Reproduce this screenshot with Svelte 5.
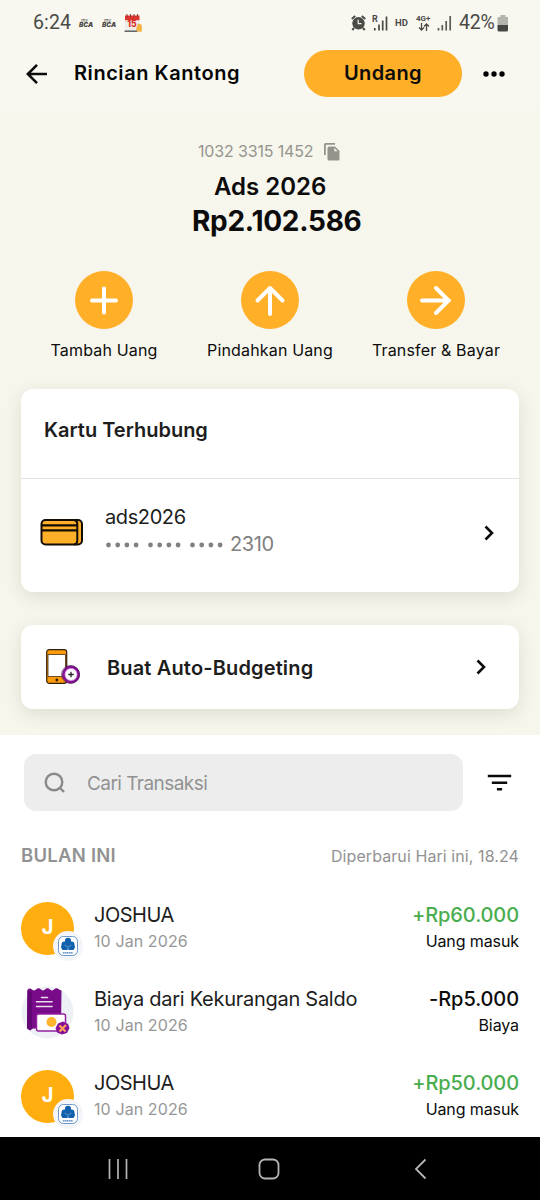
<script lang="ts">
  type Transaction = {
    title: string;
    date: string;
    amount: string;
    note: string;
    kind: 'in' | 'fee';
  };

  const actions = [
    { label: 'Tambah Uang', path: 'M29 17.500v24M17 29.500h24' },
    { label: 'Pindahkan Uang', path: 'M29 43V17M16.500 29.500L29 17l12.500 12.500' },
    { label: 'Transfer & Bayar', path: 'M15 29.500h27M29 17l12.500 12.500L29 42' },
  ];

  const transactions: Transaction[] = [
    { title: 'JOSHUA', date: '10 Jan 2026', amount: '+Rp60.000', note: 'Uang masuk', kind: 'in' },
    { title: 'Biaya dari Kekurangan Saldo', date: '10 Jan 2026', amount: '-Rp5.000', note: 'Biaya', kind: 'fee' },
    { title: 'JOSHUA', date: '10 Jan 2026', amount: '+Rp50.000', note: 'Uang masuk', kind: 'in' },
  ];

  const dots = [0, 9.2, 18.4, 27.6, 42, 51.2, 60.4, 69.6, 84, 93.2, 102.4, 111.6];
</script>

<div class="screen">
  <div class="status">
    <span class="clock">6:24</span>
    {#each [1, 2] as n (n)}
      <span class="bca"><small>my</small><b>BCA</b></span>
    {/each}
    <svg class="calendar" width="19" height="19" viewBox="0 0 19 19">
      <path d="M1 2h14.500v15H1z" fill="#eeebe8" />
      <path d="M1 1.500h14.500V6.200H1z" fill="#dc3530" />
      <path d="M3 0v3M6.500 0v3M10 0v3M13.500 0v3" stroke="#8d3c35" stroke-width="1" />
      <path d="M.5 17.200h13" stroke="#555" stroke-width="1.400" />
      <text x="8" y="13.200" text-anchor="middle" font-size="8.500" font-weight="800" fill="#d82d22">15</text>
      <path d="M14 9.500l3.500 1 .5 4-.5 3.500-4-.5-1.500-2.500z" fill="#f2b544" />
    </svg>
    <div class="status-right">
      <svg class="alarm" width="15" height="16" viewBox="0 0 15 16">
        <circle cx="7.500" cy="8.300" r="6.200" fill="#4a4a47" />
        <path d="M.8 4l3.400-3M14.200 4l-3.400-3M3 13l-1.700 2M12 13l1.700 2" stroke="#4a4a47" stroke-width="2" />
        <path d="M7.200 4.800V8.700h3.300" stroke="#f8f7ef" stroke-width="1.200" fill="none" />
      </svg>
      <svg class="signal-r" width="16" height="17" viewBox="0 0 16 17">
        <text x="0" y="7" font-size="9" font-weight="700" fill="#4a4a47">R</text>
        <path d="M2.800 13v2.500M7 9.500v6M10.700 5.500v10M14.500 1.500v14" stroke="#4a4a47" stroke-width="1.700" />
      </svg>
      <span class="hd">HD</span>
      <span class="net">
        <span>4G+</span>
        <svg width="12" height="8" viewBox="0 0 12 8" fill="none" stroke="#4a4a47" stroke-width="1.300">
          <path d="M3.500 0v7M1 4.500L3.500 7 6 4.500M8.500 8V1M6 3.500L8.500 1 11 3.500" />
        </svg>
      </span>
      <svg class="signal" width="16" height="15" viewBox="0 0 16 15">
        <path d="M1.500 12v2.500M5.300 9v5.500M9.200 5v9.500M13.200 0v14.500" stroke="#5b5b57" stroke-width="1.700" />
      </svg>
      <span class="percent">42%</span>
      <svg width="12" height="17" viewBox="0 0 12 17">
        <path d="M3.500 0h5v2H11v8H.5V2h3z" fill="#b4b4af" />
        <path d="M.5 10H11v5q0 1.500-1.500 1.500H2Q.5 16.500.5 15z" fill="#464643" />
      </svg>
    </div>
  </div>

  <header>
    <svg class="back" width="22" height="22" viewBox="0 0 22 22">
      <path d="M21 11H2M11 1.800L1.800 11l9.200 9.200" />
    </svg>
    <h1>Rincian Kantong</h1>
    <button class="invite">Undang</button>
    <svg class="more" width="22" height="6" viewBox="0 0 22 6">
      <circle cx="3" cy="3" r="2.700" /><circle cx="11" cy="3" r="2.700" /><circle cx="19" cy="3" r="2.700" />
    </svg>
  </header>

  <section class="summary">
    <div class="account">
      <span>1032 3315 1452</span>
      <svg width="16" height="18" viewBox="0 0 16 18">
        <path d="M.9 12V1.500q0-.6.600-.6H11" fill="none" stroke="#94948d" stroke-width="1.800" />
        <path d="M5 3.500h6l4.500 4.500v8q0 1.500-1.500 1.500H5Q3.500 17.500 3.500 16V5Q3.500 3.500 5 3.500z" fill="#94948d" />
        <path d="M10.300 5v3.300h3.300z" fill="#f7f6ed" />
      </svg>
    </div>
    <div class="name">Ads 2026</div>
    <div class="balance">Rp2.102.586</div>
    <div class="actions">
      {#each actions as action (action.label)}
        <div class="action">
          <svg width="58" height="58" viewBox="0 0 58 58">
            <circle cx="29" cy="29" r="29" fill="#ffaf28" />
            <path d={action.path} fill="none" stroke="#fff" stroke-width="4" stroke-linecap="round" stroke-linejoin="round" />
          </svg>
          <span>{action.label}</span>
        </div>
      {/each}
    </div>

    <div class="card linked">
      <h2>Kartu Terhubung</h2>
      <div class="linked-row">
        <svg class="wallet" width="43" height="27" viewBox="0 0 43 27">
          <rect x="1.500" y="1" width="40.500" height="24.500" rx="4" fill="#ffaf28" stroke="#130d05" stroke-width="2" />
          <path d="M1.500 6.400h35.500M1.500 11.300h35.500" stroke="#130d05" stroke-width="2.200" />
          <path d="M34 1q3.300.5 3.300 4v16.500q0 3.500-3.300 4" fill="none" stroke="#130d05" stroke-width="2" />
        </svg>
        <div class="linked-text">
          <div class="card-name">ads2026</div>
          <div class="card-number">
            <svg width="119" height="6" viewBox="0 0 119 6">
              {#each dots as x (x)}
                <circle cx={x + 3.5} cy="3" r="2.400" fill="#808080" />
              {/each}
            </svg>
            <span>2310</span>
          </div>
        </div>
        <svg class="chevron" width="10" height="16" viewBox="0 0 10 16"><path d="M1.500 1.500L8 8l-6.500 6.500" /></svg>
      </div>
    </div>

    <div class="card budgeting">
      <svg class="phone" width="35" height="36" viewBox="0 0 35 36">
        <rect x=".7" y=".7" width="20" height="33.600" rx="2.500" fill="#fb9a0b" stroke="#34210d" stroke-width="1.200" />
        <path d="M2 5.500h17.500v22H2z" fill="#fff" stroke="#4b2b10" stroke-width=".8" />
        <circle cx="10.800" cy="31" r="1.400" fill="#34210d" />
        <circle cx="25" cy="25.500" r="7.600" fill="#fff" stroke="#870f95" stroke-width="2.800" />
        <circle cx="24.500" cy="25.500" r="9" fill="none" stroke="#2d1736" stroke-width=".6" />
        <circle cx="25" cy="25.500" r="6" fill="none" stroke="#c679cf" stroke-width=".7" />
        <path d="M25 22.800v5.400M22.300 25.500h5.400" stroke="#252027" stroke-width="1.300" />
      </svg>
      <h2>Buat Auto-Budgeting</h2>
      <svg class="chevron" width="10" height="16" viewBox="0 0 10 16"><path d="M1.500 1.500L8 8l-6.500 6.500" /></svg>
    </div>
  </section>

  <section class="history">
    <div class="search-row">
      <div class="search">
        <svg width="22" height="22" viewBox="0 0 22 22" fill="none" stroke="#8a8a8a" stroke-width="2.400">
          <circle cx="10" cy="10" r="8.300" /><path d="M15.500 15.500l4.500 4.500" />
        </svg>
        <span>Cari Transaksi</span>
      </div>
      <svg class="filter" width="25" height="18" viewBox="0 0 25 18" stroke="#0b0b0b" stroke-width="2.600">
        <path d="M.8 2h23.400M4.800 8.700h15.400M9.900 15.200h5.200" />
      </svg>
    </div>
    <div class="month">
      <b>BULAN INI</b>
      <span>Diperbarui Hari ini, 18.24</span>
    </div>

    {#each transactions as item, i (i)}
      <div class="transaction">
        {#if item.kind === 'in'}
          <div class="avatar">
            <span>J</span>
            <svg class="bank" width="30" height="30" viewBox="0 0 30 30">
              <circle cx="15" cy="15" r="15" fill="#f3f5f8" />
              <rect x="5.500" y="5.500" width="19" height="19" rx="5" fill="#fff" stroke="#4a7db8" stroke-width=".8" />
              <g fill="#1261ad">
                <circle cx="15" cy="9.900" r="3.100" />
                <circle cx="11.400" cy="13.500" r="2.900" />
                <circle cx="18.600" cy="13.500" r="2.900" />
                <path d="M12 11h6v6h-6z" />
                <path d="M8 14.500l6.700 1.500v3H9.500Q7.700 18 8 14.500zM22 14.500l-6.700 1.500v3h5.200q1.800-1 1.500-4.500z" />
              </g>
              <path d="M11.500 14l3.500 2 3.500-2" fill="none" stroke="#8db7df" stroke-width=".6" />
              <path d="M10 21.800h10" stroke="#3f7ab8" stroke-width="1.200" stroke-dasharray="1.600 .4" />
            </svg>
          </div>
        {:else}
          <svg class="receipt" width="53" height="53" viewBox="0 0 53 53">
            <circle cx="26.500" cy="26.500" r="26" fill="#edf1f5" />
            <path d="M6.500 4q2-2.500 4.500-.5 2 2 4 0 2.500-2.500 5 0 2 2 4 0 2.500-2.500 5 0 2 2 4 0 2.500-2.500 5 0l2.500 1-.5 38H12l-3 2-3-2z" fill="#780b87" />
            <path d="M6.500 4l4.500 1.500V42L9 44l-3-2z" fill="#640575" />
            <path d="M20.500 11.500h6M15.500 15.800h15.500M15.500 20.500h15.500" stroke="#ecdaef" stroke-width="1.600" stroke-linecap="round" />
            <rect x="15.500" y="28" width="29" height="17" rx="2" fill="#fff" stroke="#92209f" stroke-width="1.500" />
            <circle cx="30.500" cy="36" r="5" fill="#ffb52b" />
            <path d="M42 35.500l5 2.500 1.500 4-2.500 5-5 1.500-5-2-1.500-4.500 2.500-4.500z" fill="#841099" />
            <path d="M38.500 39.500l6 6M45 39l-6.500 6.500" stroke="#ffa05c" stroke-width="2.200" />
          </svg>
        {/if}
        <div class="info">
          <span class="title" class:long={item.kind === 'fee'}>{item.title}</span>
          <span class="date">{item.date}</span>
        </div>
        <div class="value">
          <span class="amount" class:green={item.kind === 'in'}>{item.amount}</span>
          <span class="note">{item.note}</span>
        </div>
      </div>
    {/each}
  </section>

  <nav>
    <svg width="540" height="63" viewBox="0 0 540 63" fill="none" stroke="#b5b5b5">
      <path d="M109.500 22v20M118 22v20M126.500 22v20" stroke-width="1.700" />
      <rect x="259.500" y="22.500" width="19" height="19" rx="5.500" stroke-width="1.800" />
      <path d="M425.500 22.500L416 32l9.500 9.500" stroke-width="1.800" />
    </svg>
  </nav>
</div>

<style>
  :global(body) {
    margin: 0;
  }

  .screen {
    width: 540px;
    height: 1200px;
    display: flex;
    flex-direction: column;
    overflow: hidden;
    font-family: Inter, "Noto Sans", sans-serif;
    color: #0c0c0c;
    background: #f9f8f0;
    white-space: nowrap;
  }

  svg {
    display: block;
    flex: none;
  }

  h1,
  h2 {
    margin: 0;
    font-size: 20px;
    font-weight: 600;
  }

  .status {
    height: 46px;
    box-sizing: border-box;
    padding: 0 31px 0 33px;
    display: flex;
    align-items: center;
    color: #4a4a47;
    font-family: Roboto, sans-serif;
  }

  .clock {
    width: 46px;
    font-size: 19.5px;
    letter-spacing: 0.1px;
    line-height: 22px;
    margin-top: -1px;
  }

  .bca {
    width: 23px;
    display: flex;
    flex-direction: column;
    line-height: 6px;
    font-style: italic;
    font-family: Inter, sans-serif;
  }

  .bca small {
    font-size: 5px;
    line-height: 3px;
    padding-left: 2px;
  }

  .bca b {
    font-size: 6.5px;
    font-weight: 900;
  }

  .calendar {
    margin-left: -1.5px;
    font-family: Inter, sans-serif;
  }

  .status-right {
    margin-left: auto;
    display: flex;
    align-items: center;
  }

  .alarm {
    margin-right: 6px;
  }

  .hd {
    width: 21px;
    margin-left: 7px;
    font-size: 9.5px;
    font-weight: 700;
    margin-top: -2px;
  }

  .net {
    width: 21px;
    display: flex;
    flex-direction: column;
    font-size: 8px;
    font-weight: 700;
    line-height: 8px;
  }

  .net svg {
    margin-left: 2px;
  }

  .percent {
    width: 38px;
    margin-left: 6px;
    font-size: 19.5px;
    line-height: 22px;
    margin-top: -1px;
    letter-spacing: -0.2px;
  }

  header {
    height: 54px;
    display: flex;
    align-items: center;
    padding-left: 26px;
  }

  header h1 {
    width: 230px;
    margin-left: 26px;
    margin-top: -1px;
    line-height: 26px;
    letter-spacing: 0.55px;
    color: #060606;
  }

  .back,
  .chevron {
    fill: none;
    stroke: #0c0c0c;
    stroke-width: 2.6;
  }

  .back {
    margin-top: 1px;
  }

  .invite {
    width: 158px;
    height: 47px;
    padding: 0;
    border: 0;
    border-radius: 24px;
    background: #ffaf28;
    font: 600 20px Inter, sans-serif;
    letter-spacing: 0.4px;
    color: #0c0c0c;
  }

  .more {
    margin-left: 21px;
    margin-top: 1px;
  }

  .summary {
    height: 635px;
    box-sizing: border-box;
    padding: 38px 21px 0;
    background: linear-gradient(#f9f8f0, #f7f6ed 24px);
  }

  .account {
    height: 26px;
    display: flex;
    align-items: center;
    padding-left: 177px;
    gap: 11px;
    font-size: 16px;
    letter-spacing: -0.15px;
    color: #94948d;
  }

  .account span {
    width: 115px;
  }

  .account svg {
    margin-top: 2px;
  }

  .name {
    padding-left: 193px;
    line-height: 45px;
    font-size: 24px;
    font-weight: 600;
  }

  .balance {
    padding-left: 171px;
    margin-top: -9px;
    line-height: 43px;
    font-size: 28px;
    font-weight: 700;
    letter-spacing: -0.28px;
  }

  .actions {
    margin-top: 28px;
    display: grid;
    grid-template-columns: repeat(3, 166px);
  }

  .action {
    display: flex;
    flex-direction: column;
    align-items: center;
    font-size: 16px;
    line-height: 22px;
    letter-spacing: 0.16px;
  }

  .action span {
    margin-top: 10px;
  }

  .card {
    background: #fff;
    border-radius: 12px;
    box-shadow: 0 5px 18px rgba(50, 50, 20, 0.12);
    color: #1d1d1d;
  }

  .linked {
    height: 203px;
    margin-top: 28px;
  }

  .linked h2 {
    height: 90px;
    box-sizing: border-box;
    padding: 0 23px;
    border-bottom: 1px solid #e2e2e2;
    line-height: 82px;
  }

  .linked-row {
    display: flex;
    padding: 25px 25px 0 19px;
  }

  .wallet {
    margin-top: 15px;
  }

  .linked-text {
    margin-left: 22px;
    flex: 1;
    font-size: 20px;
    line-height: 27px;
  }

  .card-name {
    letter-spacing: -0.4px;
  }

  .card-number {
    display: flex;
    align-items: center;
    gap: 6px;
    letter-spacing: -0.4px;
    color: #808080;
  }

  .linked-row .chevron {
    margin-top: 21px;
  }

  .budgeting {
    height: 84px;
    margin-top: 33px;
    display: flex;
    align-items: center;
    padding: 0 33px 0 25px;
    box-sizing: border-box;
  }

  .budgeting h2 {
    flex: 1;
    margin-left: 26px;
    padding-top: 1px;
    letter-spacing: 0.15px;
  }

  .history {
    height: 402px;
    box-sizing: border-box;
    padding: 19px 21px 0;
    background: #fff;
    overflow: hidden;
  }

  .search-row {
    display: flex;
    align-items: center;
    padding-left: 3px;
  }

  .search {
    width: 439px;
    height: 57px;
    box-sizing: border-box;
    padding-left: 20px;
    border-radius: 12px;
    background: #ededed;
    display: flex;
    align-items: center;
    gap: 21px;
    font-size: 19px;
    letter-spacing: -0.55px;
    color: #929292;
  }

  .search span {
    padding-top: 2px;
  }

  .filter {
    margin-left: 24px;
  }

  .month {
    height: 74px;
    box-sizing: border-box;
    padding-top: 15px;
    display: flex;
    justify-content: space-between;
    line-height: 60px;
    color: #929292;
    font-size: 16px;
    letter-spacing: 0.08px;
  }

  .month b {
    font-size: 18.5px;
    font-weight: 600;
    line-height: 59px;
    letter-spacing: 0.25px;
  }

  .transaction {
    height: 84px;
    display: flex;
    align-items: center;
  }

  .avatar,
  .receipt {
    margin-top: 2px;
  }

  .avatar {
    position: relative;
    width: 53px;
    height: 53px;
    flex: none;
    border-radius: 50%;
    background: #ffad0f;
    color: #fff;
    font-size: 20px;
    font-weight: 700;
    line-height: 50px;
    text-align: center;
  }

  .bank {
    position: absolute;
    left: 32px;
    top: 29px;
  }

  .info,
  .value {
    display: flex;
    flex-direction: column;
  }

  .info {
    margin-left: 20px;
    flex: 1;
  }

  .value {
    align-items: flex-end;
  }

  .title,
  .amount {
    font-size: 20px;
    line-height: 28px;
    color: #1d1d1d;
  }

  .title {
    letter-spacing: -0.5px;
  }

  .title.long {
    letter-spacing: -0.27px;
  }

  .amount {
    font-weight: 500;
    letter-spacing: -0.1px;
    color: #0c0c0c;
  }

  .amount.green {
    color: #49ad4e;
  }

  .date,
  .note {
    font-size: 16px;
    line-height: 25px;
  }

  .date {
    letter-spacing: 0.1px;
    color: #979797;
  }

  .note {
    letter-spacing: -0.1px;
  }

  nav {
    height: 63px;
    background: #000;
  }
</style>
